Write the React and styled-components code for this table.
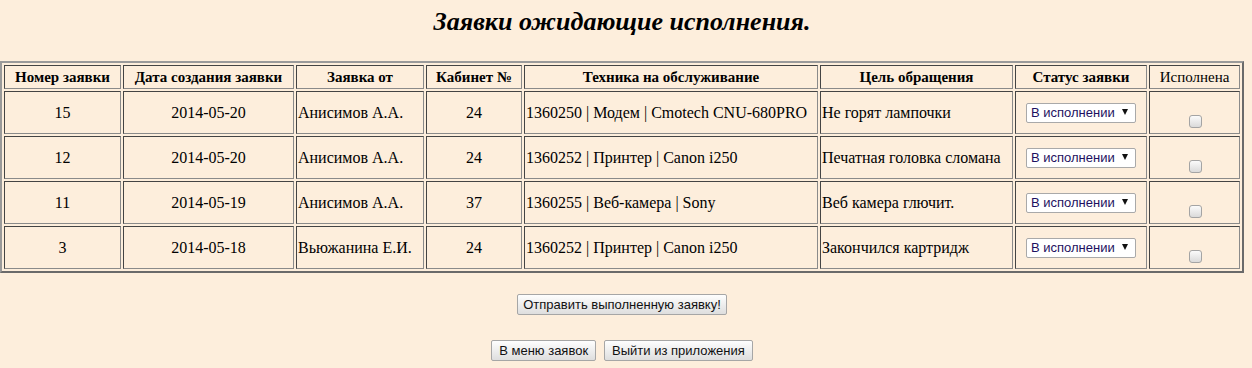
import React from 'react';
import styled, {createGlobalStyle} from 'styled-components';

const GlobalStyle = createGlobalStyle`
  html, body {
    margin: 0;
    padding: 0;
    background: #fdeedc;
  }
  body {
    font-family: "Liberation Serif", "Times New Roman", serif;
    font-size: 16px;
    color: #000;
  }
`

const Page = styled.div`
  width: 1244px;
  display: flex;
  flex-direction: column;
  align-items: center;
`

const Title = styled.h1`
  margin: 6px 0 0;
  height: 55px;
  font-family: "Liberation Serif", "DejaVu Serif", serif;
  font-style: italic;
  font-weight: bold;
  font-size: 26px;
  line-height: 32px;
`

const Table = styled.table`
  width: 1244px;
  table-layout: fixed;
  border-collapse: separate;
  border-spacing: 2px;
  border: 2px solid;
  border-color: #9a9a9a #6a6a6a #6a6a6a #9a9a9a;
  box-sizing: border-box;
`

const Head = styled.th`
  width: ${p => p.$w}px;
  height: 24px;
  box-sizing: border-box;
  padding: 1px;
  border: 1px solid;
  border-color: #444 #8a8a8a #8a8a8a #444;
  font-weight: ${p => (p.$plain ? 'normal' : 'bold')};
  font-size: 15px;
  text-align: center;
  white-space: nowrap;
`

const Cell = styled.td`
  height: 43px;
  box-sizing: border-box;
  padding: 1px;
  border: 1px solid;
  border-color: #444 #8a8a8a #8a8a8a #444;
  text-align: ${p => p.$align || 'left'};
  vertical-align: ${p => p.$valign || 'middle'};
  white-space: nowrap;
  overflow: hidden;
`

const SelectWrap = styled.span`
  position: relative;
  display: inline-block;
`

const Select = styled.select`
  appearance: none;
  width: 110px;
  height: 20px;
  box-sizing: border-box;
  margin: 0;
  padding: 0 0 0 4px;
  border: 1px solid #a9a9a9;
  border-radius: 2px;
  background: #fff;
  font-family: "Liberation Sans", Arial, sans-serif;
  font-size: 13px;
  color: #1d1060;
  outline: none;
`

const Arrow = styled.span`
  position: absolute;
  right: 8px;
  top: 6px;
  width: 0;
  height: 0;
  border-left: 3px solid transparent;
  border-right: 3px solid transparent;
  border-top: 6px solid #111;
  pointer-events: none;
`

const Check = styled.input`
  appearance: none;
  display: inline-block;
  width: 13px;
  height: 13px;
  box-sizing: border-box;
  margin: 3px 3px 4px 5px;
  border: 1px solid #a4a4a4;
  border-radius: 3px;
  background: linear-gradient(#fbfbfb, #dadada);
  vertical-align: bottom;
`

const Actions = styled.div`
  display: flex;
  gap: 8px;
  justify-content: center;
  margin-top: ${p => p.$top}px;
`

const Button = styled.button`
  height: 21px;
  box-sizing: border-box;
  padding: 0 ${p => (p.$wide ? 5 : 7)}px;
  border: 1px solid #a6a6a6;
  border-radius: 2px;
  background: linear-gradient(#fefefe, #dedede);
  font-family: "Liberation Sans", Arial, sans-serif;
  font-size: 13px;
  color: #111;
`

const columns = [
    {title: 'Номер заявки', w: 117},
    {title: 'Дата создания заявки', w: 171},
    {title: 'Заявка от', w: 128},
    {title: 'Кабинет №', w: 96},
    {title: 'Техника на обслуживание', w: 294},
    {title: 'Цель обращения', w: 193},
    {title: 'Статус заявки', w: 132},
    {title: 'Исполнена', w: 91, plain: true},
]

const orders = [
    {id: 15, date: '2014-05-20', from: 'Анисимов А.А.', room: 24, tech: '1360250 | Модем | Cmotech CNU-680PRO', goal: 'Не горят лампочки'},
    {id: 12, date: '2014-05-20', from: 'Анисимов А.А.', room: 24, tech: '1360252 | Принтер | Canon i250', goal: 'Печатная головка сломана'},
    {id: 11, date: '2014-05-19', from: 'Анисимов А.А.', room: 37, tech: '1360255 | Веб-камера | Sony', goal: 'Веб камера глючит.'},
    {id: 3, date: '2014-05-18', from: 'Вьюжанина Е.И.', room: 24, tech: '1360252 | Принтер | Canon i250', goal: 'Закончился картридж'},
]

const App = () => {
    return (
        <Page>
            <GlobalStyle/>
            <Title>Заявки ожидающие исполнения.</Title>
            <Table>
                <thead>
                <tr>
                    {columns.map(c => <Head key={c.title} $w={c.w} $plain={c.plain}>{c.title}</Head>)}
                </tr>
                </thead>
                <tbody>
                {orders.map(o => (
                    <tr key={o.id}>
                        <Cell $align="center">{o.id}</Cell>
                        <Cell $align="center">{o.date}</Cell>
                        <Cell>{o.from}</Cell>
                        <Cell $align="center">{o.room}</Cell>
                        <Cell>{o.tech}</Cell>
                        <Cell>{o.goal}</Cell>
                        <Cell $align="center">
                            <SelectWrap>
                                <Select defaultValue="work">
                                    <option value="work">В исполнении</option>
                                    <option value="done">Исполнена</option>
                                </Select>
                                <Arrow/>
                            </SelectWrap>
                        </Cell>
                        <Cell $align="center" $valign="bottom">
                            <Check type="checkbox"/>
                        </Cell>
                    </tr>
                ))}
                </tbody>
            </Table>
            <Actions $top={21}>
                <Button $wide>Отправить выполненную заявку!</Button>
            </Actions>
            <Actions $top={25}>
                <Button>В меню заявок</Button>
                <Button>Выйти из приложения</Button>
            </Actions>
        </Page>
    );
};

export default App;
